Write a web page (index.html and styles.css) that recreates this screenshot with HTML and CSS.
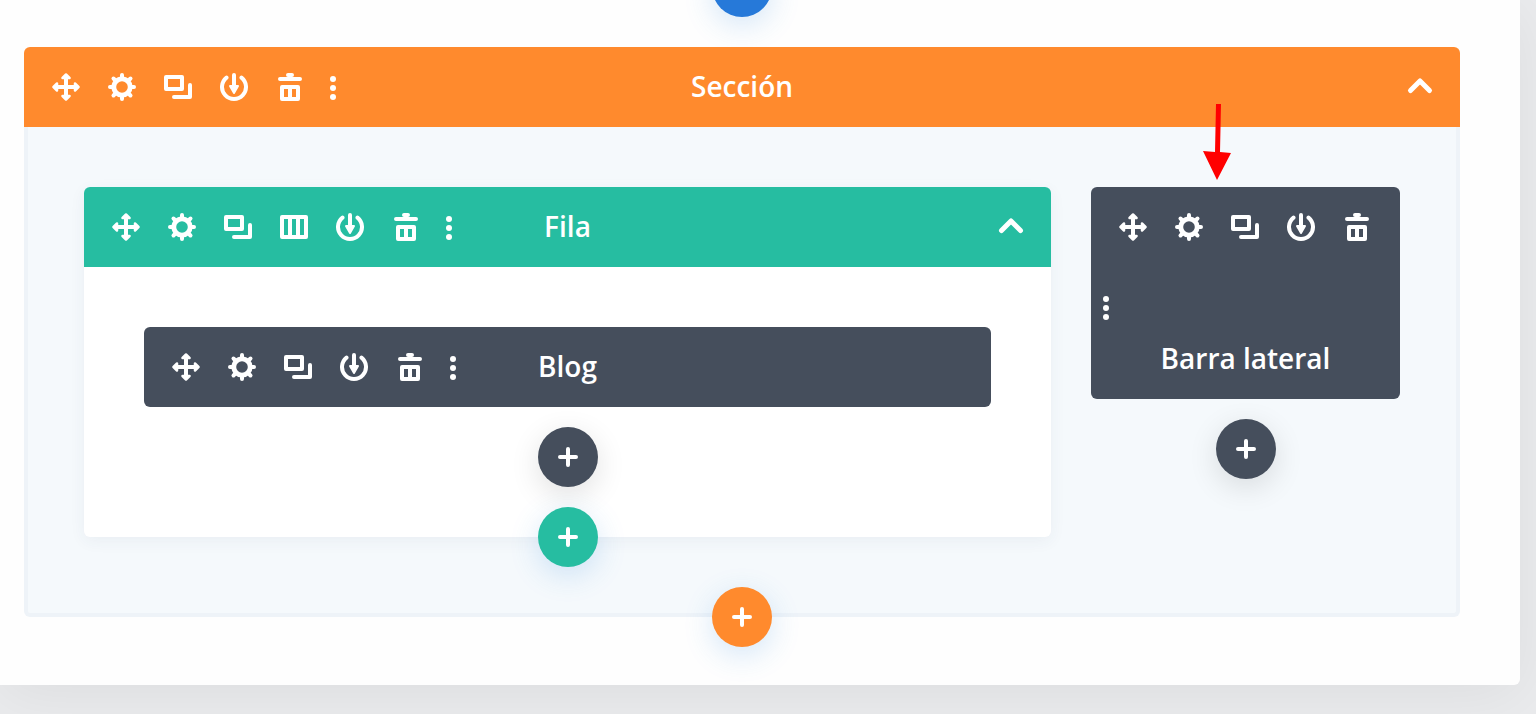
FILE: index.html
```html
<!DOCTYPE html>
<html lang="es">
<head>
    <meta charset="utf-8">
    <title>Constructor</title>
    <meta name="viewport" content="width=device-width, initial-scale=1">
    <link rel="stylesheet" href="styles.css">
</head>
<body>
    <svg class="sprite" aria-hidden="true">
        <symbol id="i-move" viewBox="0 0 28 28">
            <path d="M14 4v20M4 14h20" fill="none" stroke="currentColor" stroke-width="4"/>
            <path d="M14 1.500l3.500 3.500h-7zM14 26.500l3.500-3.500h-7zM1.500 14L5 10.500v7zM26.500 14L23 10.500v7z" fill="currentColor" stroke="currentColor" stroke-width="2.500" stroke-linejoin="round"/>
        </symbol>
        <symbol id="i-gear" viewBox="0 0 28 28">
            <circle cx="14" cy="14" r="8.200" fill="none" stroke="currentColor" stroke-width="4.800"/>
            <path d="M14 5V2M14 23v3M5 14H2M23 14h3M7.600 7.600L5.500 5.500M20.400 7.600l2.100-2.100M7.600 20.400l-2.100 2.100M20.400 20.400l2.100 2.100" fill="none" stroke="currentColor" stroke-width="4" stroke-linecap="round"/>
        </symbol>
        <symbol id="i-copy" viewBox="0 0 28 28">
            <path d="M2 4h16v12H2zM26 12v12H10" fill="none" stroke="currentColor" stroke-width="4" stroke-linejoin="round" stroke-linecap="round"/>
        </symbol>
        <symbol id="i-columns" viewBox="0 0 28 28">
            <path d="M2 4h24v20H2zM10 4v20M18 4v20" fill="none" stroke="currentColor" stroke-width="4" stroke-linejoin="round"/>
        </symbol>
        <symbol id="i-save" viewBox="0 0 28 28">
            <path d="M6.500 4.600a12 12 0 1 0 15 0M14 2v12" fill="none" stroke="currentColor" stroke-width="4" stroke-linecap="round"/>
            <path d="M10 13h8l-4 7z" fill="currentColor" stroke="currentColor" stroke-width="2" stroke-linejoin="round"/>
        </symbol>
        <symbol id="i-trash" viewBox="0 0 28 28">
            <path d="M4 6h20M12 2h4" fill="none" stroke="currentColor" stroke-width="4" stroke-linecap="round"/>
            <path d="M6 14h16v12H6zM14 14v12" fill="none" stroke="currentColor" stroke-width="4" stroke-linejoin="round"/>
        </symbol>
        <symbol id="i-dots" viewBox="0 0 28 28">
            <g fill="currentColor"><circle cx="14" cy="6" r="3"/><circle cx="14" cy="15" r="3"/><circle cx="14" cy="24" r="3"/></g>
        </symbol>
        <symbol id="i-up" viewBox="0 0 28 28">
            <path d="M4.500 17.500L14 8l9.500 9.500" fill="none" stroke="currentColor" stroke-width="5" stroke-linecap="round" stroke-linejoin="round"/>
        </symbol>
        <symbol id="i-plus" viewBox="0 0 28 28">
            <path d="M14 6v16M6 14h16" fill="none" stroke="currentColor" stroke-width="4" stroke-linecap="round"/>
        </symbol>
    </svg>

    <main class="builder">
        <button class="add add-blue" aria-label="Añadir sección"><svg><use href="#i-plus"/></svg></button>

        <section class="section">
            <header class="bar bar-orange">
                <div class="tools">
                    <button class="tool" aria-label="Mover"><svg><use href="#i-move"/></svg></button>
                    <button class="tool" aria-label="Ajustes"><svg><use href="#i-gear"/></svg></button>
                    <button class="tool" aria-label="Duplicar"><svg><use href="#i-copy"/></svg></button>
                    <button class="tool" aria-label="Guardar"><svg><use href="#i-save"/></svg></button>
                    <button class="tool" aria-label="Eliminar"><svg><use href="#i-trash"/></svg></button>
                    <button class="tool more" aria-label="Más"><svg><use href="#i-dots"/></svg></button>
                </div>
                <h2 class="title">Sección</h2>
                <button class="tool toggle" aria-label="Contraer"><svg><use href="#i-up"/></svg></button>
            </header>

            <div class="section-body">
                <div class="row">
                    <header class="bar bar-green">
                        <div class="tools">
                            <button class="tool" aria-label="Mover"><svg><use href="#i-move"/></svg></button>
                            <button class="tool" aria-label="Ajustes"><svg><use href="#i-gear"/></svg></button>
                            <button class="tool" aria-label="Duplicar"><svg><use href="#i-copy"/></svg></button>
                            <button class="tool" aria-label="Columnas"><svg><use href="#i-columns"/></svg></button>
                            <button class="tool" aria-label="Guardar"><svg><use href="#i-save"/></svg></button>
                            <button class="tool" aria-label="Eliminar"><svg><use href="#i-trash"/></svg></button>
                            <button class="tool more" aria-label="Más"><svg><use href="#i-dots"/></svg></button>
                        </div>
                        <h3 class="title">Fila</h3>
                        <button class="tool toggle" aria-label="Contraer"><svg><use href="#i-up"/></svg></button>
                    </header>
                    <div class="row-body">
                        <div class="bar module">
                            <div class="tools">
                                <button class="tool" aria-label="Mover"><svg><use href="#i-move"/></svg></button>
                                <button class="tool" aria-label="Ajustes"><svg><use href="#i-gear"/></svg></button>
                                <button class="tool" aria-label="Duplicar"><svg><use href="#i-copy"/></svg></button>
                                <button class="tool" aria-label="Guardar"><svg><use href="#i-save"/></svg></button>
                                <button class="tool" aria-label="Eliminar"><svg><use href="#i-trash"/></svg></button>
                                <button class="tool more" aria-label="Más"><svg><use href="#i-dots"/></svg></button>
                            </div>
                            <h4 class="title">Blog</h4>
                        </div>
                        <button class="add add-dark" aria-label="Añadir módulo"><svg><use href="#i-plus"/></svg></button>
                        <button class="add add-green" aria-label="Añadir fila"><svg><use href="#i-plus"/></svg></button>
                    </div>
                </div>

                <aside class="sidebar">
                    <svg class="arrow" viewBox="0 0 28 76" aria-hidden="true">
                        <path d="M13 0h5l-1 48 11 1-14 27L0 47l12 1z" fill="#ff0000"/>
                    </svg>
                    <div class="module module-narrow">
                        <div class="tools">
                            <button class="tool" aria-label="Mover"><svg><use href="#i-move"/></svg></button>
                            <button class="tool" aria-label="Ajustes"><svg><use href="#i-gear"/></svg></button>
                            <button class="tool" aria-label="Duplicar"><svg><use href="#i-copy"/></svg></button>
                            <button class="tool" aria-label="Guardar"><svg><use href="#i-save"/></svg></button>
                            <button class="tool" aria-label="Eliminar"><svg><use href="#i-trash"/></svg></button>
                            <button class="tool more" aria-label="Más"><svg><use href="#i-dots"/></svg></button>
                        </div>
                        <h4 class="title">Barra lateral</h4>
                    </div>
                    <button class="add add-dark" aria-label="Añadir módulo"><svg><use href="#i-plus"/></svg></button>
                </aside>
            </div>
        </section>

        <button class="add add-orange" aria-label="Añadir sección"><svg><use href="#i-plus"/></svg></button>
    </main>
</body>
</html>
```
FILE: styles.css
```css
* {
    box-sizing: border-box;
}
body {
    margin: 0;
    min-height: 100vh;
    padding-right: 16px;
    overflow-x: hidden;
    background-color: #eaebed;
    font-family: "Open Sans", "Noto Sans", sans-serif;
}
.sprite {
    display: none;
}
.builder {
    display: flex;
    flex-direction: column;
    align-items: center;
    padding: 0 60px 38px 24px;
    background-color: #fefefe;
    border-radius: 0 0 6px 0;
    box-shadow: 0 10px 60px rgba(0, 0, 0, 0.06);
}
button {
    padding: 0;
    border: 0;
    background: none;
    color: inherit;
    cursor: pointer;
}
svg {
    display: block;
    width: 28px;
    height: 28px;
}

/* bars */
.bar {
    display: grid;
    grid-template-columns: 1fr auto 1fr;
    align-items: center;
    color: #ffffff;
}
.bar-orange {
    background-color: #ff8a2d;
    border-radius: 6px 6px 0 0;
}
.bar-green {
    background-color: #26bda1;
    border-radius: 6px 6px 0 0;
}
.title {
    margin: 0;
    padding-bottom: 2px;
    font-size: 28px;
    font-weight: 600;
    line-height: 22px;
    text-align: center;
}
.tools {
    display: flex;
    flex-wrap: wrap;
}
.tool {
    display: flex;
    align-items: center;
    justify-content: center;
    width: 56px;
    height: 80px;
}
.tool:first-child {
    margin-left: 14px;
}
.tool.more {
    width: 30px;
}
.tool.toggle {
    justify-self: end;
    margin-right: 12px;
}

/* section */
.section {
    align-self: stretch;
}
.section-body {
    display: grid;
    grid-template-columns: calc(75% - 20px) calc(25% - 20px);
    gap: 40px;
    align-items: start;
    padding: 60px 56px 76px;
    border: 4px solid #eef3f8;
    border-top: 0;
    border-radius: 0 0 6px 6px;
    background-color: #f5f9fc;
}
.row {
    border-radius: 6px;
    background-color: #ffffff;
    box-shadow: 0 4px 16px rgba(43, 70, 100, 0.06);
}
.row-body {
    display: flex;
    flex-direction: column;
    align-items: center;
    gap: 20px;
    padding: 60px 60px 0;
}
.module {
    background-color: #454e5c;
    border-radius: 6px;
    color: #ffffff;
}
.row-body .module {
    align-self: stretch;
}
.sidebar {
    position: relative;
    display: flex;
    flex-direction: column;
    align-items: center;
    gap: 20px;
}
.module-narrow {
    align-self: stretch;
    padding-bottom: 28px;
}
.arrow {
    position: absolute;
    top: -83px;
    left: 112px;
    width: 28px;
    height: 76px;
}

/* round add buttons */
.add {
    display: flex;
    align-items: center;
    justify-content: center;
    flex: none;
    width: 60px;
    height: 60px;
    border-radius: 50%;
    color: #ffffff;
    box-shadow: 0 8px 30px rgba(43, 135, 218, 0.2);
}
.add-blue {
    margin-top: -43px;
    margin-bottom: 30px;
    background-color: #2679d9;
}
.add-dark {
    background-color: #454e5c;
    box-shadow: 0 8px 30px rgba(0, 0, 0, 0.12);
}
.add-green {
    margin-bottom: -30px;
    background-color: #26bda1;
}
.add-orange {
    position: relative;
    margin-top: -30px;
    background-color: #ff8a2d;
}
```
